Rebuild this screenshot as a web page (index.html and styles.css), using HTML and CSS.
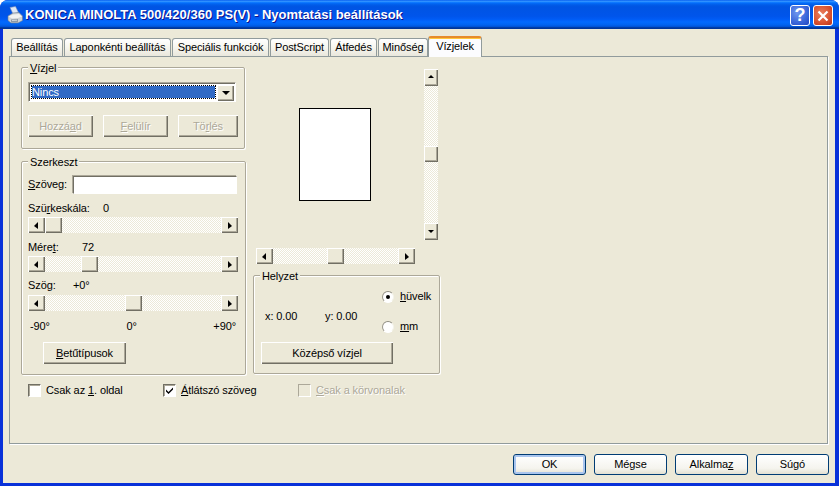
FILE: index.html
```html
<!DOCTYPE html>
<html lang="hu">
<head>
    <meta charset="UTF-8">
    <meta name="viewport" content="width=device-width, initial-scale=1.0">
    <title>Nyomtatási beállítások</title>
    <link rel="stylesheet" href="styles.css">
</head>
<body>
    <div class="window">
        <!-- Title bar -->
        <div class="titlebar">
            <svg class="app-icon" width="17" height="18" viewBox="0 0 17 18">
                <path d="M3 1.5 L8.5 0.5 L11.5 6.5 L6 8 Z" fill="#dfe8f6" stroke="#7f93b8" stroke-width="0.6"/>
                <path d="M1 10 L6 7 L12 6.5 L15.5 10 L15.5 14.5 L11 17 L4 17 L1 14.5 Z" fill="#cfd3d6" stroke="#6d7d92" stroke-width="0.6"/>
                <path d="M1.5 10.5 L6 8.5 L12 8 L15 10.5 L11 12 L5 12.5 Z" fill="#f2f3f2"/>
                <path d="M4 13.5 L11 13 L11 16.5 L4 16.5 Z" fill="#8d99a5"/>
                <path d="M5 14.5 L10 14.2" stroke="#e4e7ea" stroke-width="0.8"/>
            </svg>
            <span class="title-text">KONICA MINOLTA 500/420/360 PS(V) - Nyomtatási beállítások</span>
            <div class="caption-btn help">?</div>
            <div class="caption-btn close">
                <svg width="12" height="12" viewBox="0 0 12 12">
                    <path d="M1.5 1.5 L10.5 10.5 M10.5 1.5 L1.5 10.5" stroke="#fff" stroke-width="2.2"/>
                </svg>
            </div>
        </div>

        <div class="client">
            <!-- Tabs -->
            <div class="tabs">
                <div class="tab">Beállítás</div>
                <div class="tab">Laponkénti beállítás</div>
                <div class="tab">Speciális funkciók</div>
                <div class="tab">PostScript</div>
                <div class="tab">Átfedés</div>
                <div class="tab">Minőség</div>
                <div class="tab active">Vízjelek</div>
            </div>

            <div class="page">
                <div class="columns">
                    <div class="col-left">
                        <!-- Vízjel -->
                        <div class="group group-mark">
                            <span class="group-title"><u>V</u>ízjel</span>
                            <div class="combo">
                                <div class="combo-value">Nincs</div>
                                <div class="sb-btn combo-btn"><i class="arrow down"></i></div>
                            </div>
                            <div class="mark-buttons">
                                <div class="btn disabled btn-mark">Hozzá<u>a</u>d</div>
                                <div class="btn disabled btn-mark"><u>F</u>elülír</div>
                                <div class="btn disabled btn-del">Tö<u>r</u>lés</div>
                            </div>
                        </div>

                        <!-- Szerkeszt -->
                        <div class="group group-edit">
                            <span class="group-title">Szerkeszt</span>
                            <div class="text-row">
                                <span class="text-label"><u>S</u>zöveg:</span>
                                <div class="text-input"></div>
                            </div>

                            <div class="value-row first">
                                <span class="lbl-gray">Szü<u>r</u>keskála:</span>
                                <span>0</span>
                            </div>
                            <div class="scrollbar slider">
                                <div class="sb-btn"><i class="arrow left"></i></div>
                                <div class="track"><div class="sb-btn thumb" style="margin-left: 0"></div></div>
                                <div class="sb-btn"><i class="arrow right"></i></div>
                            </div>

                            <div class="value-row">
                                <span class="lbl-size">Mére<u>t</u>:</span>
                                <span>72</span>
                            </div>
                            <div class="scrollbar slider">
                                <div class="sb-btn"><i class="arrow left"></i></div>
                                <div class="track"><div class="sb-btn thumb" style="margin-left: 36px"></div></div>
                                <div class="sb-btn"><i class="arrow right"></i></div>
                            </div>

                            <div class="value-row angle">
                                <span class="lbl-angle">Szö<u>g</u>:</span>
                                <span>+0°</span>
                            </div>
                            <div class="scrollbar slider angle">
                                <div class="sb-btn"><i class="arrow left"></i></div>
                                <div class="track"><div class="sb-btn thumb" style="margin-left: 80px"></div></div>
                                <div class="sb-btn"><i class="arrow right"></i></div>
                            </div>

                            <div class="ticks">
                                <span>-90°</span>
                                <span>0°</span>
                                <span>+90°</span>
                            </div>
                            <div class="btn btn-font"><u>B</u>etűtípusok</div>
                        </div>
                    </div>

                    <div class="col-mid">
                        <!-- Preview -->
                        <div class="preview-row">
                            <div class="stage">
                                <div class="sheet"></div>
                            </div>
                            <div class="scrollbar vertical">
                                <div class="sb-btn"><i class="arrow up"></i></div>
                                <div class="track"><div class="sb-btn thumb" style="margin-top: 60px"></div></div>
                                <div class="sb-btn"><i class="arrow down"></i></div>
                            </div>
                        </div>
                        <div class="scrollbar preview-h">
                            <div class="sb-btn"><i class="arrow left"></i></div>
                            <div class="track"><div class="sb-btn thumb" style="margin-left: 54px"></div></div>
                            <div class="sb-btn"><i class="arrow right"></i></div>
                        </div>

                        <!-- Helyzet -->
                        <div class="group group-pos">
                            <span class="group-title">Helyzet</span>
                            <div class="pos-row">
                                <div class="coords">
                                    <span class="coord-x">x: 0.00</span>
                                    <span>y: 0.00</span>
                                </div>
                                <div class="units">
                                    <div class="radio-item"><span class="radio on"></span><span><u>h</u>üvelk</span></div>
                                    <div class="radio-item"><span class="radio"></span><span><u>m</u>m</span></div>
                                </div>
                            </div>
                            <div class="btn btn-center">Középső vízjel</div>
                        </div>
                    </div>
                </div>

                <div class="checks">
                    <div class="check-item">
                        <span class="box"></span>
                        <span>Csak az <u>1</u>. oldal</span>
                    </div>
                    <div class="check-item">
                        <span class="box">
                            <svg width="9" height="9" viewBox="0 0 9 9"><path d="M1 3.5 L3.5 6 L8 1.5 L8 3.5 L3.5 8 L1 5.5 Z" fill="#000"/></svg>
                        </span>
                        <span><u>Á</u>tlátszó szöveg</span>
                    </div>
                    <div class="check-item disabled">
                        <span class="box"></span>
                        <span><u>C</u>sak a körvonalak</span>
                    </div>
                </div>
            </div>

            <!-- Dialog buttons -->
            <div class="dialog-buttons">
                <div class="xp-btn default">OK</div>
                <div class="xp-btn">Mégse</div>
                <div class="xp-btn">Alkalma<u>z</u></div>
                <div class="xp-btn">Súgó</div>
            </div>
        </div>
    </div>
</body>
</html>
```

FILE: styles.css
```css
* {
    margin: 0;
    padding: 0;
    box-sizing: border-box;
}

body {
    font-family: "Liberation Sans", Arial, sans-serif;
    font-size: 11px;
    line-height: 13px;
    letter-spacing: -0.1px;
    color: #000;
    background-color: #fff;
    width: 839px;
    height: 486px;
    overflow: hidden;
}

u {
    text-underline-offset: 1px;
}

.window {
    height: 486px;
    display: flex;
    flex-direction: column;
    background-color: #0831d9;
    border-radius: 8px 8px 0 0;
}

/* Title bar */
.titlebar {
    height: 29px;
    display: flex;
    align-items: center;
    padding: 0 6px 0 7px;
    border-radius: 8px 8px 0 0;
    background: linear-gradient(180deg, #0058ee 0%, #3593ff 4%, #288eff 6%, #127dff 8%, #036ffc 10%, #0262ee 14%, #0057e5 20%, #0054e3 24%, #0055eb 56%, #005bf5 66%, #026afe 76%, #0062ef 86%, #0052d6 92%, #0040ab 94%, #003092 100%);
}

.app-icon {
    flex: none;
    margin-right: 1px;
}

.title-text {
    flex: 1;
    color: #fff;
    font-size: 13px;
    font-weight: bold;
    letter-spacing: 0;
    text-shadow: 1px 1px 0 #0f1089;
    white-space: nowrap;
}

.caption-btn {
    width: 20px;
    height: 21px;
    margin-top: 2px;
    display: flex;
    align-items: center;
    justify-content: center;
    border: 1px solid #fff;
    border-radius: 3px;
    color: #fff;
    font-size: 18px;
    font-weight: bold;
}

.caption-btn.help {
    margin-right: 3px;
    background: radial-gradient(circle at 35% 35%, #6f97ee 0%, #3a66d9 60%, #2347c0 100%);
}

.caption-btn.close {
    background: radial-gradient(circle at 40% 40%, #e9805f 0%, #d8512f 60%, #b8321a 100%);
}

/* Client area */
.client {
    flex: 1;
    margin: 0 4px 3px 3px;
    padding: 7px 6px 0;
    background-color: #ece9d8;
}

.tabs {
    display: grid;
    grid-template-columns: 52px 107px 97px 59px 47px 50px 53px;
    column-gap: 1px;
    align-items: end;
    height: 20px;
    margin-left: 2px;
    position: relative;
    z-index: 1;
}

.tab {
    height: 18px;
    border: 1px solid #919b9c;
    border-bottom: none;
    border-radius: 3px 3px 0 0;
    background: linear-gradient(180deg, #fff 0%, #f6f5ee 50%, #e9e7dc 100%);
    text-align: center;
    line-height: 16px;
}

.tab.active {
    height: 21px;
    margin-left: -1px;
    margin-bottom: -1px;
    border-top: 2px solid #e68b2c;
    background: #fcfcfe;
    box-shadow: inset 0 1px 0 #ffc73c;
    line-height: 17px;
}

.page {
    height: 388px;
    margin-right: 1px;
    padding: 10px 0 0 11px;
    border: 1px solid #919b9c;
    background-color: #ece9d8;
    box-shadow: 1px 1px 0 #fff;
}

.columns {
    display: flex;
    gap: 7px;
}

.col-left {
    width: 225px;
}

/* Group boxes */
.group {
    position: relative;
    border: 1px solid #aca899;
    border-radius: 2px;
    box-shadow: 1px 1px 0 #fff, inset 1px 1px 0 #fff;
    padding: 14px 0 0 6px;
}

.group-title {
    position: absolute;
    top: -6px;
    left: 6px;
    padding: 0 2px;
    background-color: #ece9d8;
}

.group-mark {
    height: 82px;
    width: 224px;
}

.group-edit {
    height: 214px;
    margin-top: 12px;
}

/* Combo box */
.combo {
    display: flex;
    width: 208px;
    height: 20px;
    padding: 2px 1px 0 2px;
    background-color: #fff;
    border: 1px solid;
    border-color: #aca899 #fff #fff #aca899;
    box-shadow: inset 1px 1px 0 #716f64;
}

.combo-value {
    flex: 1;
    height: 14px;
    margin-right: 1px;
    background-color: #316ac5;
    background-clip: padding-box;
    color: #fff;
    border: 1px dotted #000;
    line-height: 12px;
}

.combo-btn {
    width: 16px;
    height: 16px;
}

.mark-buttons {
    display: flex;
    gap: 10px;
    margin-top: 13px;
}

/* Classic buttons */
.btn {
    height: 22px;
    display: flex;
    align-items: center;
    justify-content: center;
    background-color: #ece9d8;
    box-shadow: inset 1px 1px 0 #fff, inset -1px -1px 0 #716f64, inset -2px -2px 0 #aca899;
}

.btn.disabled {
    color: #aca899;
    text-shadow: 1px 1px 0 #fff;
}

.btn-mark {
    width: 65px;
}

.btn-del {
    width: 60px;
}

.btn-font {
    width: 83px;
    margin: 9px 0 0 15px;
}

.btn-center {
    width: 132px;
    margin-top: 9px;
}

/* Scroll bars */
.scrollbar {
    display: flex;
    flex: none;
}

.sb-btn {
    flex: none;
    width: 17px;
    height: 16px;
    display: flex;
    align-items: center;
    justify-content: center;
    background-color: #ece9d8;
    box-shadow: inset 1px 1px 0 #fff, inset -1px -1px 0 #716f64, inset -2px -2px 0 #aca899;
}

.track {
    flex: 1;
    background-color: #ece9d8;
    background-image: conic-gradient(#fff 25%, #ece9d8 0 50%, #fff 0 75%, #ece9d8 0);
    background-size: 2px 2px;
}

.slider {
    width: 210px;
    height: 16px;
    margin-top: 2px;
}

.slider.angle {
    margin-top: 3px;
}

.preview-h {
    width: 159px;
    height: 16px;
    margin: 8px 0 0 3px;
}

.vertical {
    flex-direction: column;
    width: 14px;
    height: 171px;
}

.vertical .sb-btn {
    width: 14px;
    height: 17px;
}

.vertical .thumb {
    height: 16px;
}

/* Arrow glyphs */
.arrow {
    display: block;
    width: 0;
    height: 0;
    border-style: solid;
    border-color: transparent;
}

.arrow.left {
    border-width: 4px 4px 3px 0;
    border-right-color: #000;
    margin-right: 2px;
}

.arrow.right {
    border-width: 4px 0 3px 4px;
    border-left-color: #000;
}

.arrow.up {
    border-width: 0 3px 3px;
    border-bottom-color: #000;
    margin-bottom: 2px;
}

.arrow.down {
    border-width: 3px 3px 0;
    border-top-color: #000;
    margin-bottom: 1px;
}

.combo-btn .arrow.down {
    border-width: 4px 4px 0;
}

/* Edit group rows */
.text-row {
    display: flex;
}

.text-label {
    width: 45px;
    line-height: 16px;
}

.text-input {
    width: 164px;
    height: 18px;
    background-color: #fff;
    border: 1px solid;
    border-color: #716f64 #fff #fff #716f64;
    box-shadow: -1px -1px 0 #aca899;
}

.value-row {
    display: flex;
    height: 13px;
    margin-top: 8px;
}

.value-row.angle {
    margin-top: 7px;
}

.lbl-gray {
    width: 75px;
}

.lbl-size {
    width: 54px;
}

.lbl-angle {
    width: 45px;
}

.ticks {
    display: flex;
    justify-content: space-between;
    width: 210px;
    margin-top: 9px;
    padding: 0 2px;
}

/* Middle column */
.col-mid {
    width: 188px;
}

.preview-row {
    display: flex;
    gap: 10px;
    margin: 2px 0 0 3px;
}

.stage {
    width: 158px;
    height: 171px;
    display: flex;
    align-items: center;
    justify-content: center;
}

.sheet {
    width: 72px;
    height: 93px;
    background-color: #fff;
    border: 1px solid #000;
}

.group-pos {
    height: 99px;
    width: 187px;
    margin-top: 11px;
    padding-left: 7px;
}

.pos-row {
    display: flex;
    height: 43px;
}

.coords {
    display: flex;
    width: 121px;
    padding: 20px 0 0 4px;
}

.coord-x {
    width: 60px;
}

.units {
    display: flex;
    flex-direction: column;
    gap: 17px;
}

.radio-item {
    display: flex;
    align-items: center;
    gap: 6px;
}

.radio {
    position: relative;
    width: 12px;
    height: 12px;
    border-radius: 50%;
    background-color: #fff;
    border: 1px solid;
    border-color: #8e8c80 #f4f3ea #fff #9a988c;
}

.radio.on::after {
    content: "";
    position: absolute;
    top: 3px;
    left: 3px;
    width: 4px;
    height: 4px;
    border-radius: 50%;
    background-color: #000;
}

/* Check boxes */
.checks {
    display: grid;
    grid-template-columns: 135px 135px auto;
    margin: 9px 0 0 7px;
}

.check-item {
    display: flex;
    align-items: center;
    gap: 5px;
}

.box {
    width: 13px;
    height: 13px;
    display: flex;
    align-items: center;
    justify-content: center;
    background-color: #fff;
    border: 1px solid;
    border-color: #716f64 #fff #fff #716f64;
    box-shadow: inset 1px 1px 0 #aca899;
}

.check-item.disabled {
    color: #aca899;
    text-shadow: 1px 1px 0 #fff;
}

.check-item.disabled .box {
    background-color: #ece9d8;
    border-color: #aca899 #fff #fff #aca899;
    box-shadow: none;
}

/* Dialog buttons */
.dialog-buttons {
    display: flex;
    justify-content: flex-end;
    gap: 8px;
    margin-top: 10px;
}

.xp-btn {
    width: 73px;
    height: 21px;
    display: flex;
    align-items: center;
    justify-content: center;
    border: 1px solid #003c74;
    border-radius: 3px;
    background: linear-gradient(180deg, #fff 0%, #f5f4ee 70%, #e3e0d2 100%);
}

.xp-btn.default {
    box-shadow: inset 0 0 0 2px #a9c5ee;
}
```
